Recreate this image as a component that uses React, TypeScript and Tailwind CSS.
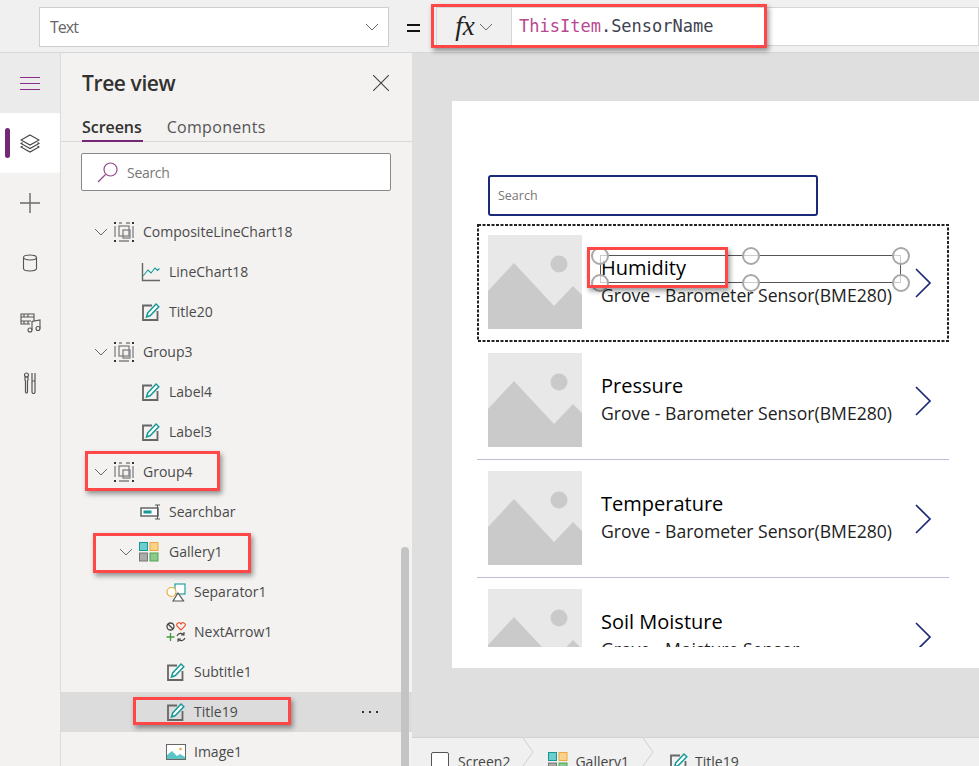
import React from "react";

const sans = "font-['Open_Sans','Noto_Sans',sans-serif]";

function Chevron({ className = "" }: { className?: string }) {
  return (
    <svg width="14" height="8" viewBox="0 0 14 8" className={className} fill="none" stroke="#6a6a6a" strokeWidth="1">
      <path d="M1 1l6 6 6-6" />
    </svg>
  );
}

function GroupIcon() {
  return (
    <svg width="22" height="22" viewBox="0 0 22 22" fill="none">
      <g fill="#333">
        <rect x="1" y="1" width="2" height="2" />
        <rect x="19" y="1" width="2" height="2" />
        <rect x="1" y="19" width="2" height="2" />
        <rect x="19" y="19" width="2" height="2" />
      </g>
      <g stroke="#808080" strokeWidth="1.300">
        <path d="M2 5v11M20 5v12M6 2h3M13 2h4M6 20h10" />
        <rect x="6" y="5" width="10" height="10" />
        <rect x="10" y="9" width="7" height="8" />
      </g>
    </svg>
  );
}

function EditIcon() {
  return (
    <svg width="20" height="20" viewBox="0 0 20 20" fill="none">
      <path d="M11 3.500H2v14.500h14.500V9" stroke="#666" strokeWidth="1.800" />
      <path d="M5.500 15l1.200-4 8.300-9 2.800 2.700-8.500 8.800z" stroke="#169a9a" strokeWidth="1.500" fill="#fff" />
    </svg>
  );
}

function LineChartIcon() {
  return (
    <svg width="20" height="20" viewBox="0 0 20 20" fill="none">
      <path d="M1.500 1v17.500h17.500" stroke="#666" strokeWidth="1.400" />
      <path d="M2 14l5-6 3 3 4-5 2.500 2.500 2-2" stroke="#169a9a" strokeWidth="1.100" />
    </svg>
  );
}

function GalleryIcon({ size = 20 }: { size?: number }) {
  return (
    <svg width={size} height={size} viewBox="0 0 20 20">
      <rect x="0.500" y="0.500" width="8" height="8" fill="#6fcccc" stroke="#119999" />
      <rect x="11" y="0.500" width="8" height="8" fill="#fcd28a" stroke="#eaa840" />
      <rect x="0.500" y="11" width="8" height="8" fill="#aaaaaa" stroke="#777" />
      <rect x="11" y="11" width="8" height="8" fill="#8cc98c" stroke="#4ea54e" />
    </svg>
  );
}

function SearchbarIcon() {
  return (
    <svg width="22" height="16" viewBox="0 0 22 16" fill="none">
      <rect x="1" y="4" width="17" height="8" fill="#fff" stroke="#666" strokeWidth="1.500" />
      <rect x="3.500" y="6.500" width="8" height="3" fill="#119999" />
      <path d="M15 1h5M17.500 1v14M15 15h5" stroke="#555" strokeWidth="1" />
    </svg>
  );
}

function ShapesIcon() {
  return (
    <svg width="20" height="19" viewBox="0 0 20 19" fill="none">
      <rect x="9" y="1" width="10" height="10" fill="#fff" stroke="#119999" strokeWidth="1.100" />
      <circle cx="5.500" cy="9" r="4.500" fill="#fff" stroke="#efaa35" strokeWidth="1.200" />
      <path d="M7 18l5-8 5.500 8z" fill="#fff" stroke="#555" strokeWidth="1.200" />
    </svg>
  );
}

function IconsIcon() {
  return (
    <svg width="20" height="20" viewBox="0 0 20 20" fill="none">
      <circle cx="4.500" cy="4.500" r="3.500" stroke="#444" strokeWidth="1.300" />
      <path d="M2 2l5 5" stroke="#444" strokeWidth="1.300" />
      <path d="M15 8l-4-4a2.200 2.200 0 014-2 2.200 2.200 0 014 2z" stroke="#e8552f" strokeWidth="1.200" />
      <path d="M4.500 11v8M0.500 15h8" stroke="#3f9d3f" strokeWidth="1.300" />
      <path d="M11 14a4 4 0 017-1M19 16a4 4 0 01-7 1M18 10v3h-3M12 20v-3h3" stroke="#444" strokeWidth="1.100" />
    </svg>
  );
}

function ImageIcon() {
  return (
    <svg width="20" height="16" viewBox="0 0 20 16" fill="none">
      <rect x="0.500" y="0.500" width="19" height="15" fill="#fff" stroke="#666" />
      <path d="M1 15V11l5-4 5 5 3-2 5 3v2z" fill="#5cc4c4" />
      <circle cx="14.500" cy="5" r="1.300" fill="#efaa35" />
    </svg>
  );
}

function Row({
  pad,
  chevron,
  icon,
  gap,
  label,
  active,
}: {
  pad: string;
  chevron?: boolean;
  icon: React.ReactNode;
  gap: string;
  label: string;
  active?: boolean;
}) {
  return (
    <div className={`relative flex h-10 shrink-0 items-center ${pad} ${active ? "bg-[#dcdcdc]" : ""}`}>
      {chevron && <Chevron className="mr-[4px] shrink-0" />}
      <div className="flex w-[24px] shrink-0 items-center justify-center">{icon}</div>
      <span className={`${gap} pb-[2px] text-[14px] text-[#4a4a4a]`}>{label}</span>
      {active && (
        <div className="absolute left-[301px] top-[19px] flex gap-[5px]">
          <div className="h-[2px] w-[2px] bg-[#333]" />
          <div className="h-[2px] w-[2px] bg-[#333]" />
          <div className="h-[2px] w-[2px] bg-[#333]" />
        </div>
      )}
    </div>
  );
}

function Placeholder() {
  return (
    <svg width="94" height="94" viewBox="0 0 94 94" className="shrink-0">
      <rect width="94" height="94" fill="#e8e8e8" />
      <path d="M0 56L26 28 66 71 85 51 94 60V94H0z" fill="#cacaca" />
      <circle cx="71" cy="29" r="8.500" fill="#cacaca" />
    </svg>
  );
}

function GalleryRow({ title, sub, line }: { title: string; sub: string; line?: boolean }) {
  return (
    <div className={`relative flex h-[118px] shrink-0 pl-[11px] pt-[11px] ${line ? "border-b border-[#bdbdd7]" : ""}`}>
      <Placeholder />
      <div className="ml-[19px] flex flex-col pt-[18px] text-black">
        <span className="h-[29px] text-[20px] font-medium leading-[30px]">{title}</span>
        <span className="whitespace-nowrap text-[17.6px] leading-[27px] text-[#222]">{sub}</span>
      </div>
      <svg width="18" height="32" viewBox="0 0 18 32" className="absolute left-[437px] top-[43px]" fill="none" stroke="#1b2a78" strokeWidth="1.700">
        <path d="M2 2l14 14L2 30" />
      </svg>
    </div>
  );
}

function RedBox({ className }: { className: string }) {
  return <div className={`pointer-events-none absolute border-[3px] border-[#ff4747] shadow-[2px_3px_5px_rgba(0,0,0,0.4)] ${className}`} />;
}

function Handle({ className }: { className: string }) {
  return <div className={`absolute h-[18px] w-[18px] rounded-full border-2 border-[#a8a8a8] bg-white/70 ${className}`} />;
}

export default function App() {
  return (
    <div className={`relative flex h-[766px] w-[979px] flex-col overflow-hidden bg-[#f3f2f1] ${sans}`}>
      {/* formula bar */}
      <div className="flex h-[53px] shrink-0 items-start border-b border-[#d6d6d6] bg-[#f0f0f0] pl-[39px] pt-[7px]">
        <div className="flex h-[40px] w-[350px] items-center justify-between border border-[#cfcfcf] bg-white pl-[10px] pr-[9px]">
          <span className="text-[16px] tracking-[-1px] text-[#666]">Text</span>
          <Chevron />
        </div>
        <div className="mt-[8px] flex w-[47px] justify-center">
          <div className="mt-[9px] ml-[2px] flex h-[8px] w-[13px] flex-col justify-between border-y-2 border-[#111]" />
        </div>
        <div className="flex h-[39px] flex-1 border border-[#d6d6d6] bg-white">
          <div className="flex w-[75px] items-center justify-center gap-[4px] border-r border-[#d6d6d6] bg-[#f0f0f0]">
            <span className="font-['Liberation_Serif',serif] text-[27px] italic leading-none text-[#222]">fx</span>
            <Chevron />
          </div>
          <div className="flex items-center pl-[7px] font-['DejaVu_Sans_Mono',monospace] text-[17px] text-[#3f4350]">
            <span className="text-[#b9488f]">ThisItem</span>.SensorName
          </div>
        </div>
      </div>

      <div className="flex min-h-0 flex-1">
        {/* rail */}
        <div className="flex w-[61px] shrink-0 flex-col border-r border-[#dcdcdc]">
          <div className="flex h-[60px] shrink-0 flex-col items-center justify-center gap-[5px] bg-[#ebebeb]">
            <div className="h-px w-[20px] bg-[#8a2b8e]" />
            <div className="h-px w-[20px] bg-[#8a2b8e]" />
            <div className="h-px w-[20px] bg-[#8a2b8e]" />
          </div>
          <div className="relative flex h-[60px] shrink-0 items-center justify-center rounded-r-[3px] bg-white">
            <div className="absolute left-[5px] top-[15px] h-[30px] w-[5px] rounded-full bg-[#742774]" />
            <svg width="20" height="19" viewBox="0 0 20 19" fill="none" stroke="#444" strokeWidth="1.100">
              <path d="M10 1l9 5-9 5-9-5z" />
              <path d="M2.500 8.500L1 9.500l9 5 9-5-1.500-1" />
              <path d="M2.500 12L1 13l9 5 9-5-1.500-1" />
            </svg>
          </div>
          <div className="flex h-[60px] shrink-0 items-center justify-center">
            <svg width="20" height="20" viewBox="0 0 20 20" stroke="#6a6a6a" strokeWidth="1.400"><path d="M10 0v20M0 10h20" /></svg>
          </div>
          <div className="flex h-[60px] shrink-0 items-center justify-center">
            <svg width="16" height="18" viewBox="0 0 16 18" fill="none" stroke="#555" strokeWidth="1.100">
              <ellipse cx="8" cy="3.500" rx="6.500" ry="2.500" />
              <path d="M1.500 3.500v11c0 1.400 3 2.500 6.500 2.500s6.500-1.100 6.500-2.500v-11" />
            </svg>
          </div>
          <div className="flex h-[60px] shrink-0 items-center justify-center">
            <svg width="21" height="20" viewBox="0 0 21 20" fill="none" stroke="#555" strokeWidth="1.100">
              <path d="M14 8V1H1v10h9M1 4h13M1 8h10M4 1v3M8 1v3M4 8v3M8 8v3" />
              <circle cx="10" cy="17" r="2" />
              <circle cx="18" cy="15.500" r="2" />
              <path d="M12 17V8.500l8-1.500v8.500" />
            </svg>
          </div>
          <div className="flex h-[60px] shrink-0 items-center justify-center">
            <svg width="14" height="22" viewBox="0 0 14 22" fill="none" stroke="#555" strokeWidth="1.200">
              <circle cx="3.500" cy="3" r="2" />
              <path d="M2 5h3v3l-.500 1v11a1 1 0 01-2 0V9L2 8z" />
              <path d="M9 1v8h3V1M9 9v11a1.500 1.500 0 003 0V9" />
            </svg>
          </div>
        </div>

        {/* tree panel */}
        <div className="relative flex w-[351px] shrink-0 flex-col overflow-hidden bg-[#f3f2f1]">
          <div className="flex h-[60px] shrink-0 items-center justify-between pl-[21px] pr-[23px]">
            <span className="mt-[2px] text-[21px] font-semibold tracking-[-0.4px] text-[#323130]">Tree view</span>
            <svg width="16" height="16" viewBox="0 0 16 16" stroke="#444" strokeWidth="1.100"><path d="M0 0l16 16M16 0L0 16" /></svg>
          </div>
          <div className="flex h-[29px] shrink-0 items-start border-b border-[#d8d8d8] pl-[21px]">
            <div className="h-[29px] border-b-[2px] border-[#742774] pr-px">
              <span className="text-[16px] font-semibold leading-[28px] tracking-[-0.05px] text-[#323130]">Screens</span>
            </div>
            <span className="ml-[24px] text-[16px] leading-[28px] tracking-[0.3px] text-[#555]">Components</span>
          </div>
          <div className="ml-[20px] mt-[11px] flex h-[38px] w-[310px] shrink-0 items-center rounded-[2px] border border-[#8a8886] bg-white pl-[15px]">
            <svg width="22" height="22" viewBox="0 0 22 22" fill="none" stroke="#8f4a8f" strokeWidth="1.200">
              <circle cx="13.500" cy="8.500" r="6.500" />
              <path d="M8.500 13.500L1 21" />
            </svg>
            <span className="ml-[8px] text-[14px] tracking-[-0.3px] text-[#777]">Search</span>
          </div>
          <div className="mt-[21px] flex flex-col">
            <Row pad="pl-[33px]" chevron icon={<GroupIcon />} gap="ml-[7px]" label="CompositeLineChart18" />
            <Row pad="pl-[78px]" icon={<LineChartIcon />} gap="ml-[6px]" label="LineChart18" />
            <Row pad="pl-[78px]" icon={<EditIcon />} gap="ml-[6px]" label="Title20" />
            <Row pad="pl-[33px]" chevron icon={<GroupIcon />} gap="ml-[7px]" label="Group3" />
            <Row pad="pl-[78px]" icon={<EditIcon />} gap="ml-[6px]" label="Label4" />
            <Row pad="pl-[78px]" icon={<EditIcon />} gap="ml-[6px]" label="Label3" />
            <Row pad="pl-[33px]" chevron icon={<GroupIcon />} gap="ml-[7px]" label="Group4" />
            <Row pad="pl-[78px]" icon={<SearchbarIcon />} gap="ml-[6px]" label="Searchbar" />
            <Row pad="pl-[58px]" chevron icon={<GalleryIcon />} gap="ml-[8px]" label="Gallery1" />
            <Row pad="pl-[103px]" icon={<ShapesIcon />} gap="ml-[6px]" label="Separator1" />
            <Row pad="pl-[103px]" icon={<IconsIcon />} gap="ml-[6px]" label="NextArrow1" />
            <Row pad="pl-[103px]" icon={<EditIcon />} gap="ml-[6px]" label="Subtitle1" />
            <Row pad="pl-[103px]" icon={<EditIcon />} gap="ml-[6px]" label="Title19" active />
            <Row pad="pl-[103px]" icon={<ImageIcon />} gap="ml-[6px]" label="Image1" />
          </div>
          <div className="absolute left-[340px] top-[494px] h-[240px] w-[8px] rounded-full bg-[#c4c4c4]" />
        </div>

        {/* canvas */}
        <div className="flex min-w-0 flex-1 flex-col bg-[#dfdfdf]">
          <div className="h-[684px] shrink-0 pl-[40px] pt-[48px]">
            <div className="flex h-[567px] flex-col bg-white pl-[25px] pt-[74px]">
              <div className="ml-[11px] flex h-[41px] w-[330px] shrink-0 items-center rounded-[3px] border-2 border-[#1b2a78] pl-[8px] pt-[1px] text-[12.5px] text-[#777]">
                Search
              </div>
              <div className="relative mt-[8px] flex h-[423px] w-[472px] shrink-0 flex-col overflow-hidden">
                <GalleryRow title="Humidity" sub="Grove - Barometer Sensor(BME280)" />
                <svg width="472" height="118" className="pointer-events-none absolute left-0 top-0" fill="none">
                  <rect x="1" y="1" width="470" height="116" stroke="#222" strokeWidth="2" strokeDasharray="3 1.500" />
                </svg>
                <GalleryRow title="Pressure" sub="Grove - Barometer Sensor(BME280)" line />
                <GalleryRow title="Temperature" sub="Grove - Barometer Sensor(BME280)" line />
                <GalleryRow title="Soil Moisture" sub="Grove - Moisture Sensor" />
                {/* selection frame */}
                <div className="absolute left-[123px] top-[31px] h-[28px] w-[301px] border border-[#555]" />
                <Handle className="left-[114px] top-[23px]" />
                <Handle className="left-[265px] top-[23px]" />
                <Handle className="left-[415px] top-[23px]" />
                <Handle className="left-[114px] top-[50px]" />
                <Handle className="left-[265px] top-[50px]" />
                <Handle className="left-[415px] top-[50px]" />
              </div>
            </div>
          </div>
          <div className="flex h-[40px] shrink-0 items-start border-t border-[#d2d2d2] bg-[#f0f0f0] pl-[19px] text-[14px] text-[#444]">
            <div className="mt-[14px] h-[20px] w-[18px] rounded-[2px] border border-[#555] bg-white" />
            <span className="ml-[9px] mt-[13px]">Screen2</span>
            <svg width="12" height="28" viewBox="0 0 12 28" className="ml-[12px]" fill="none" stroke="#d0d0d0"><path d="M1 0l10 14L1 28" /></svg>
            <div className="ml-[14px] mt-[14px]"><GalleryIcon /></div>
            <span className="ml-[7px] mt-[13px]">Gallery1</span>
            <svg width="12" height="28" viewBox="0 0 12 28" className="ml-[13px]" fill="none" stroke="#d0d0d0"><path d="M1 0l10 14L1 28" /></svg>
            <div className="ml-[15px] mt-[14px]"><EditIcon /></div>
            <span className="ml-[6px] mt-[13px]">Title19</span>
          </div>
        </div>
      </div>

      {/* annotations */}
      <RedBox className="left-[431px] top-[4px] h-[44px] w-[336px]" />
      <RedBox className="left-[85px] top-[451px] h-[40px] w-[135px]" />
      <RedBox className="left-[93px] top-[533px] h-[40px] w-[158px]" />
      <RedBox className="left-[133px] top-[697px] h-[28px] w-[158px]" />
      <RedBox className="left-[587px] top-[247px] h-[41px] w-[141px]" />
    </div>
  );
}
